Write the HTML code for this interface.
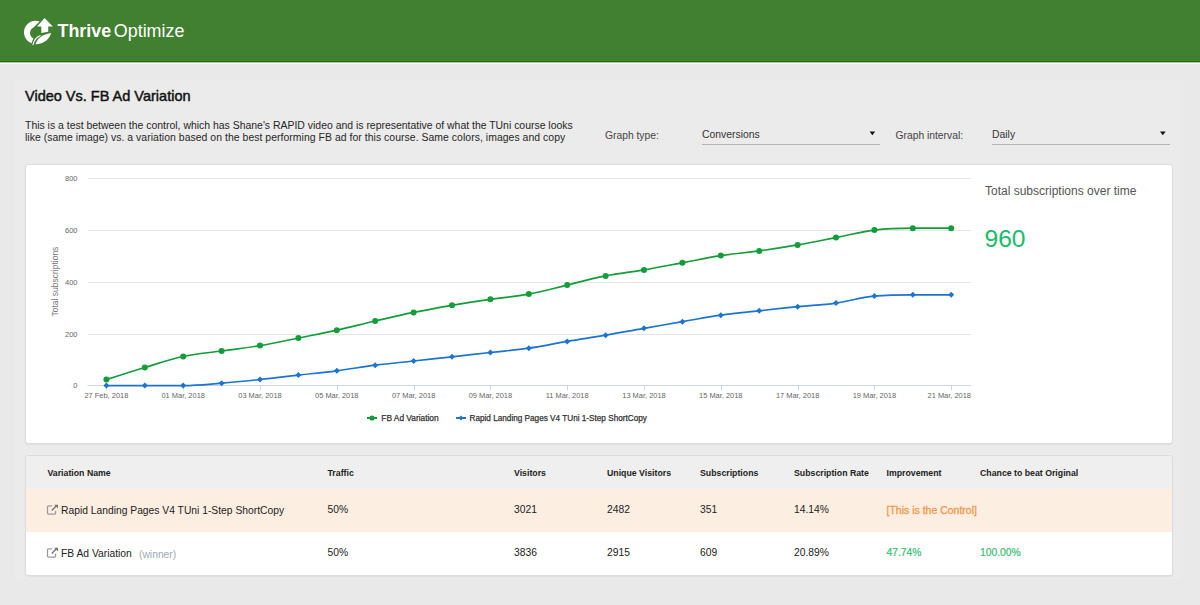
<!DOCTYPE html>
<html><head><meta charset="utf-8"><style>
*{box-sizing:border-box}
html,body{margin:0;padding:0}
body{width:1200px;height:605px;overflow:hidden;background:#e9e9e9;font-family:"Liberation Sans", sans-serif;position:relative;color:#222}
.abs{position:absolute;white-space:nowrap}
.hdr{position:absolute;left:0;top:0;width:1200px;height:61px;background:#417f31}
.hl1{position:absolute;left:0;top:61px;width:1200px;height:1px;background:#236c12}
.hl2{position:absolute;left:0;top:62px;width:1200px;height:1px;background:#a9c7a0}
.hl3{position:absolute;left:0;top:63px;width:1200px;height:1px;background:#fff}
.card{position:absolute;background:#fff;border:1px solid #dcdcdc;border-radius:3px;box-shadow:0 1px 2px rgba(0,0,0,0.05)}
.th{position:absolute;font-size:8.75px;font-weight:bold;color:#222;white-space:nowrap;top:467.8px}
.td{position:absolute;font-size:10.3px;color:#222;white-space:nowrap}
</style></head><body>
<div style="position:absolute;left:15px;top:80px;width:1165px;height:499px;background:#ebebeb"></div>
<div class="hdr"></div><div class="hl1"></div><div class="hl2"></div><div class="hl3"></div>
<svg width="40" height="38" style="position:absolute;left:20px;top:12px" viewBox="0 0 40 38">
<path d="M19.6 9.4 A11.1 11.1 0 1 0 11.6 31.2 C12 29.5 12.6 27.8 13.5 26.4 A6.1 6.1 0 0 1 13.5 15.4 Z" fill="#fff"/>
<path d="M24.5 5.9 L32.9 14.4 L28.2 14.4 L28.2 19.8 L21.3 20.9 L21.3 14.4 L17.1 14.4 Z" fill="#fff"/>
<path d="M15.6 32 C17 27 21.5 22.6 31.1 21 C29.8 26.5 24.5 31.6 16.9 32.2 Z" fill="#fff"/>
<path d="M12.9 33.2 C13.8 28.5 16.5 25.2 20.5 23.6" stroke="#fff" stroke-width="1.1" fill="none"/>
</svg>
<div class="abs" style="left:57.5px;top:18.5px;font-size:17.9px;line-height:24px;color:#fff"><b>Thrive</b><span style="margin-left:2.6px">Optimize</span></div>

<div class="abs" style="left:25px;top:88px;font-size:14.5px;line-height:16px;-webkit-text-stroke:0.45px #111;color:#111">Video Vs. FB Ad Variation</div>
<div class="abs" style="left:25px;top:119.7px;font-size:10.45px;line-height:12.6px;color:#262626">This is a test between the control, which has Shane's RAPID video and is representative of what the TUni course looks<br><span style="letter-spacing:0.037px">like (same image) vs. a variation based on the best performing FB ad for this course. Same colors, images and copy</span></div>

<div class="abs" style="left:605px;top:129.5px;font-size:10.3px;line-height:12px;color:#444">Graph type:</div>
<div class="abs" style="left:702px;top:129px;font-size:10.4px;line-height:12px;color:#333">Conversions</div>
<svg class="abs" width="1200" height="150" style="left:0;top:0"><path d="M869.6 131.6 L875.2 131.6 L872.4 135.2 Z" fill="#111"/><path d="M1160 131.6 L1165.6 131.6 L1162.8 135.2 Z" fill="#111"/></svg>
<div class="abs" style="left:702px;top:144px;width:177.5px;height:1px;background:#b5b5b5"></div>
<div class="abs" style="left:895.5px;top:129.5px;font-size:10.3px;line-height:12px;color:#444">Graph interval:</div>
<div class="abs" style="left:992px;top:129px;font-size:10.4px;line-height:12px;color:#333">Daily</div>

<div class="abs" style="left:992px;top:144px;width:178px;height:1px;background:#b5b5b5"></div>

<div class="card" style="left:25px;top:164px;width:1148px;height:280px"></div>
<svg width="1200" height="605" style="position:absolute;left:0;top:0">
<line x1="87.5" y1="178.5" x2="971" y2="178.5" stroke="#e6e6e6" stroke-width="1"/>
<line x1="87.5" y1="230.5" x2="971" y2="230.5" stroke="#e6e6e6" stroke-width="1"/>
<line x1="87.5" y1="282.5" x2="971" y2="282.5" stroke="#e6e6e6" stroke-width="1"/>
<line x1="87.5" y1="334.5" x2="971" y2="334.5" stroke="#e6e6e6" stroke-width="1"/>
<line x1="87.5" y1="385.5" x2="971" y2="385.5" stroke="#ccd6eb" stroke-width="1"/>
<line x1="106.5" y1="385.5" x2="106.5" y2="390.5" stroke="#ccd6eb" stroke-width="1"/>
<line x1="183.5" y1="385.5" x2="183.5" y2="390.5" stroke="#ccd6eb" stroke-width="1"/>
<line x1="260.5" y1="385.5" x2="260.5" y2="390.5" stroke="#ccd6eb" stroke-width="1"/>
<line x1="337.5" y1="385.5" x2="337.5" y2="390.5" stroke="#ccd6eb" stroke-width="1"/>
<line x1="414.5" y1="385.5" x2="414.5" y2="390.5" stroke="#ccd6eb" stroke-width="1"/>
<line x1="490.5" y1="385.5" x2="490.5" y2="390.5" stroke="#ccd6eb" stroke-width="1"/>
<line x1="567.5" y1="385.5" x2="567.5" y2="390.5" stroke="#ccd6eb" stroke-width="1"/>
<line x1="644.5" y1="385.5" x2="644.5" y2="390.5" stroke="#ccd6eb" stroke-width="1"/>
<line x1="721.5" y1="385.5" x2="721.5" y2="390.5" stroke="#ccd6eb" stroke-width="1"/>
<line x1="798.5" y1="385.5" x2="798.5" y2="390.5" stroke="#ccd6eb" stroke-width="1"/>
<line x1="874.5" y1="385.5" x2="874.5" y2="390.5" stroke="#ccd6eb" stroke-width="1"/>
<line x1="951.5" y1="385.5" x2="951.5" y2="390.5" stroke="#ccd6eb" stroke-width="1"/>
<text x="77.5" y="181.1" text-anchor="end" font-family="Liberation Sans, sans-serif" font-size="7.5" fill="#666">800</text>
<text x="77.5" y="233.1" text-anchor="end" font-family="Liberation Sans, sans-serif" font-size="7.5" fill="#666">600</text>
<text x="77.5" y="285.1" text-anchor="end" font-family="Liberation Sans, sans-serif" font-size="7.5" fill="#666">400</text>
<text x="77.5" y="337.1" text-anchor="end" font-family="Liberation Sans, sans-serif" font-size="7.5" fill="#666">200</text>
<text x="77.5" y="388.1" text-anchor="end" font-family="Liberation Sans, sans-serif" font-size="7.5" fill="#666">0</text>
<text x="106.4" y="398.1" text-anchor="middle" font-family="Liberation Sans, sans-serif" font-size="7.45" fill="#666">27 Feb, 2018</text>
<text x="183.2" y="398.1" text-anchor="middle" font-family="Liberation Sans, sans-serif" font-size="7.45" fill="#666">01 Mar, 2018</text>
<text x="260.0" y="398.1" text-anchor="middle" font-family="Liberation Sans, sans-serif" font-size="7.45" fill="#666">03 Mar, 2018</text>
<text x="336.8" y="398.1" text-anchor="middle" font-family="Liberation Sans, sans-serif" font-size="7.45" fill="#666">05 Mar, 2018</text>
<text x="413.6" y="398.1" text-anchor="middle" font-family="Liberation Sans, sans-serif" font-size="7.45" fill="#666">07 Mar, 2018</text>
<text x="490.4" y="398.1" text-anchor="middle" font-family="Liberation Sans, sans-serif" font-size="7.45" fill="#666">09 Mar, 2018</text>
<text x="567.2" y="398.1" text-anchor="middle" font-family="Liberation Sans, sans-serif" font-size="7.45" fill="#666">11 Mar, 2018</text>
<text x="644.0" y="398.1" text-anchor="middle" font-family="Liberation Sans, sans-serif" font-size="7.45" fill="#666">13 Mar, 2018</text>
<text x="720.8" y="398.1" text-anchor="middle" font-family="Liberation Sans, sans-serif" font-size="7.45" fill="#666">15 Mar, 2018</text>
<text x="797.6" y="398.1" text-anchor="middle" font-family="Liberation Sans, sans-serif" font-size="7.45" fill="#666">17 Mar, 2018</text>
<text x="874.4" y="398.1" text-anchor="middle" font-family="Liberation Sans, sans-serif" font-size="7.45" fill="#666">19 Mar, 2018</text>
<text x="971.0" y="398.1" text-anchor="end" font-family="Liberation Sans, sans-serif" font-size="7.45" fill="#666">21 Mar, 2018</text>
<text x="0" y="0" transform="translate(57.6,281.6) rotate(-90)" text-anchor="middle" font-family="Liberation Sans, sans-serif" font-size="8.5" fill="#777">Total subscriptions</text>
<path d="M106.40 385.60 C106.40 385.60 129.44 385.60 144.80 385.60 C160.16 385.60 167.84 385.60 183.20 385.60 C198.56 385.60 206.24 384.42 221.60 383.20 C236.96 381.98 244.64 381.12 260.00 379.50 C275.36 377.88 283.04 376.84 298.40 375.10 C313.76 373.36 321.44 372.78 336.80 370.80 C352.16 368.82 359.84 367.16 375.20 365.20 C390.56 363.24 398.24 362.68 413.60 361.00 C428.96 359.32 436.64 358.50 452.00 356.80 C467.36 355.10 475.04 354.22 490.40 352.50 C505.76 350.78 513.44 350.42 528.80 348.20 C544.16 345.98 551.84 344.00 567.20 341.40 C582.56 338.80 590.24 337.82 605.60 335.20 C620.96 332.58 628.64 331.00 644.00 328.30 C659.36 325.60 667.04 324.32 682.40 321.70 C697.76 319.08 705.44 317.38 720.80 315.20 C736.16 313.02 743.84 312.50 759.20 310.80 C774.56 309.10 782.24 308.24 797.60 306.70 C812.96 305.16 820.64 305.22 836.00 303.10 C851.36 300.98 859.04 297.40 874.40 296.10 C889.76 294.80 897.44 294.80 912.80 294.80 C928.16 294.80 951.20 294.80 951.20 294.80" fill="none" stroke="#1c74d0" stroke-width="1.7" stroke-linejoin="round" stroke-linecap="round"/>
<path d="M106.40 379.60 C106.40 379.60 129.44 372.12 144.80 367.50 C160.16 362.88 167.84 359.80 183.20 356.50 C198.56 353.20 206.24 353.18 221.60 351.00 C236.96 348.82 244.64 348.20 260.00 345.60 C275.36 343.00 283.04 341.08 298.40 338.00 C313.76 334.92 321.44 333.60 336.80 330.20 C352.16 326.80 359.84 324.56 375.20 321.00 C390.56 317.44 398.24 315.54 413.60 312.40 C428.96 309.26 436.64 307.92 452.00 305.30 C467.36 302.68 475.04 301.54 490.40 299.30 C505.76 297.06 513.44 296.94 528.80 294.10 C544.16 291.26 551.84 288.74 567.20 285.10 C582.56 281.46 590.24 278.94 605.60 275.90 C620.96 272.86 628.64 272.52 644.00 269.90 C659.36 267.28 667.04 265.66 682.40 262.80 C697.76 259.94 705.44 257.98 720.80 255.60 C736.16 253.22 743.84 253.04 759.20 250.90 C774.56 248.76 782.24 247.56 797.60 244.90 C812.96 242.24 820.64 240.56 836.00 237.60 C851.36 234.64 859.04 231.98 874.40 230.10 C889.76 228.22 897.44 228.20 912.80 228.20 C928.16 228.20 951.20 228.20 951.20 228.20" fill="none" stroke="#149c3a" stroke-width="1.7" stroke-linejoin="round" stroke-linecap="round"/>
<path d="M106.40 382.60 L109.40 385.60 L106.40 388.60 L103.40 385.60Z" fill="#1c74d0"/>
<path d="M144.80 382.60 L147.80 385.60 L144.80 388.60 L141.80 385.60Z" fill="#1c74d0"/>
<path d="M183.20 382.60 L186.20 385.60 L183.20 388.60 L180.20 385.60Z" fill="#1c74d0"/>
<path d="M221.60 380.20 L224.60 383.20 L221.60 386.20 L218.60 383.20Z" fill="#1c74d0"/>
<path d="M260.00 376.50 L263.00 379.50 L260.00 382.50 L257.00 379.50Z" fill="#1c74d0"/>
<path d="M298.40 372.10 L301.40 375.10 L298.40 378.10 L295.40 375.10Z" fill="#1c74d0"/>
<path d="M336.80 367.80 L339.80 370.80 L336.80 373.80 L333.80 370.80Z" fill="#1c74d0"/>
<path d="M375.20 362.20 L378.20 365.20 L375.20 368.20 L372.20 365.20Z" fill="#1c74d0"/>
<path d="M413.60 358.00 L416.60 361.00 L413.60 364.00 L410.60 361.00Z" fill="#1c74d0"/>
<path d="M452.00 353.80 L455.00 356.80 L452.00 359.80 L449.00 356.80Z" fill="#1c74d0"/>
<path d="M490.40 349.50 L493.40 352.50 L490.40 355.50 L487.40 352.50Z" fill="#1c74d0"/>
<path d="M528.80 345.20 L531.80 348.20 L528.80 351.20 L525.80 348.20Z" fill="#1c74d0"/>
<path d="M567.20 338.40 L570.20 341.40 L567.20 344.40 L564.20 341.40Z" fill="#1c74d0"/>
<path d="M605.60 332.20 L608.60 335.20 L605.60 338.20 L602.60 335.20Z" fill="#1c74d0"/>
<path d="M644.00 325.30 L647.00 328.30 L644.00 331.30 L641.00 328.30Z" fill="#1c74d0"/>
<path d="M682.40 318.70 L685.40 321.70 L682.40 324.70 L679.40 321.70Z" fill="#1c74d0"/>
<path d="M720.80 312.20 L723.80 315.20 L720.80 318.20 L717.80 315.20Z" fill="#1c74d0"/>
<path d="M759.20 307.80 L762.20 310.80 L759.20 313.80 L756.20 310.80Z" fill="#1c74d0"/>
<path d="M797.60 303.70 L800.60 306.70 L797.60 309.70 L794.60 306.70Z" fill="#1c74d0"/>
<path d="M836.00 300.10 L839.00 303.10 L836.00 306.10 L833.00 303.10Z" fill="#1c74d0"/>
<path d="M874.40 293.10 L877.40 296.10 L874.40 299.10 L871.40 296.10Z" fill="#1c74d0"/>
<path d="M912.80 291.80 L915.80 294.80 L912.80 297.80 L909.80 294.80Z" fill="#1c74d0"/>
<path d="M951.20 291.80 L954.20 294.80 L951.20 297.80 L948.20 294.80Z" fill="#1c74d0"/>
<circle cx="106.40" cy="379.60" r="3" fill="#149c3a"/>
<circle cx="144.80" cy="367.50" r="3" fill="#149c3a"/>
<circle cx="183.20" cy="356.50" r="3" fill="#149c3a"/>
<circle cx="221.60" cy="351.00" r="3" fill="#149c3a"/>
<circle cx="260.00" cy="345.60" r="3" fill="#149c3a"/>
<circle cx="298.40" cy="338.00" r="3" fill="#149c3a"/>
<circle cx="336.80" cy="330.20" r="3" fill="#149c3a"/>
<circle cx="375.20" cy="321.00" r="3" fill="#149c3a"/>
<circle cx="413.60" cy="312.40" r="3" fill="#149c3a"/>
<circle cx="452.00" cy="305.30" r="3" fill="#149c3a"/>
<circle cx="490.40" cy="299.30" r="3" fill="#149c3a"/>
<circle cx="528.80" cy="294.10" r="3" fill="#149c3a"/>
<circle cx="567.20" cy="285.10" r="3" fill="#149c3a"/>
<circle cx="605.60" cy="275.90" r="3" fill="#149c3a"/>
<circle cx="644.00" cy="269.90" r="3" fill="#149c3a"/>
<circle cx="682.40" cy="262.80" r="3" fill="#149c3a"/>
<circle cx="720.80" cy="255.60" r="3" fill="#149c3a"/>
<circle cx="759.20" cy="250.90" r="3" fill="#149c3a"/>
<circle cx="797.60" cy="244.90" r="3" fill="#149c3a"/>
<circle cx="836.00" cy="237.60" r="3" fill="#149c3a"/>
<circle cx="874.40" cy="230.10" r="3" fill="#149c3a"/>
<circle cx="912.80" cy="228.20" r="3" fill="#149c3a"/>
<circle cx="951.20" cy="228.20" r="3" fill="#149c3a"/>
<line x1="367" y1="418" x2="377" y2="418" stroke="#149c3a" stroke-width="2"/><circle cx="372" cy="418" r="2.6" fill="#149c3a"/>
<text x="381.3" y="420.9" font-family="Liberation Sans, sans-serif" font-size="8.35" fill="#333" stroke="#333" stroke-width="0.25">FB Ad Variation</text>
<line x1="456" y1="418" x2="466" y2="418" stroke="#1c74d0" stroke-width="2"/><path d="M461 415.5 L463.5 418 L461 420.5 L458.5 418Z" fill="#1c74d0"/>
<text x="469.5" y="420.9" font-family="Liberation Sans, sans-serif" font-size="8.2" fill="#333" stroke="#333" stroke-width="0.25">Rapid Landing Pages V4 TUni 1-Step ShortCopy</text>
</svg>
<div class="abs" style="left:985px;top:184px;font-size:12px;line-height:14px;color:#555">Total subscriptions over time</div>
<div class="abs" style="left:984.5px;top:225px;font-size:24.6px;line-height:28px;color:#18bd68">960</div>

<div class="card" style="left:25px;top:455px;width:1148px;height:121px;overflow:hidden">
  <div style="position:absolute;left:0;top:0;width:100%;height:33px;background:#efefef"></div>
  <div style="position:absolute;left:0;top:33px;width:100%;height:43px;background:#fdeee2"></div>
</div>
<div class="th" style="left:47.5px">Variation Name</div>
<div class="th" style="left:327.5px">Traffic</div>
<div class="th" style="left:514px">Visitors</div>
<div class="th" style="left:607px">Unique Visitors</div>
<div class="th" style="left:700px">Subscriptions</div>
<div class="th" style="left:794px">Subscription Rate</div>
<div class="th" style="left:886.5px">Improvement</div>
<div class="th" style="left:980px">Chance to beat Original</div>

<svg class="abs" width="14" height="12" style="left:46.2px;top:504.3px" viewBox="0 0 14 12"><path d="M6 1.9 H2.5 A1 1 0 0 0 1.5 2.9 V9.1 A1 1 0 0 0 2.5 10.1 H8.6 A1 1 0 0 0 9.6 9.1 V6.8" fill="none" stroke="#999" stroke-width="1.2"/><path d="M5.8 6.4 L10.6 1.6" stroke="#6f747a" stroke-width="1.4"/><path d="M8.2 0.8 L12 0.8 L12 4.6Z" fill="#6f747a"/></svg>
<div class="td" style="left:61px;top:505px">Rapid Landing Pages V4 TUni 1-Step ShortCopy</div>
<div class="td" style="left:327.5px;top:503.8px">50%</div>
<div class="td" style="left:514px;top:503.8px">3021</div>
<div class="td" style="left:607px;top:503.8px">2482</div>
<div class="td" style="left:700px;top:503.8px">351</div>
<div class="td" style="left:794px;top:503.8px">14.14%</div>
<div class="td" style="left:886.5px;top:503.8px;font-size:10.5px;color:#f39848;-webkit-text-stroke:0.3px #f39848">[This is the Control]</div>

<svg class="abs" width="14" height="12" style="left:46.2px;top:547.3px" viewBox="0 0 14 12"><path d="M6 1.9 H2.5 A1 1 0 0 0 1.5 2.9 V9.1 A1 1 0 0 0 2.5 10.1 H8.6 A1 1 0 0 0 9.6 9.1 V6.8" fill="none" stroke="#999" stroke-width="1.2"/><path d="M5.8 6.4 L10.6 1.6" stroke="#6f747a" stroke-width="1.4"/><path d="M8.2 0.8 L12 0.8 L12 4.6Z" fill="#6f747a"/></svg>
<div class="td" style="left:61px;top:548px">FB Ad Variation</div>
<div class="td" style="left:139px;top:549px;color:#9aa9b6">(winner)</div>
<div class="td" style="left:327.5px;top:546.8px">50%</div>
<div class="td" style="left:514px;top:546.8px">3836</div>
<div class="td" style="left:607px;top:546.8px">2915</div>
<div class="td" style="left:700px;top:546.8px">609</div>
<div class="td" style="left:794px;top:546.8px">20.89%</div>
<div class="td" style="left:886.5px;top:546.8px;color:#36bd72;-webkit-text-stroke:0.2px #36bd72">47.74%</div>
<div class="td" style="left:980px;top:546.8px;color:#36bd72;-webkit-text-stroke:0.2px #36bd72">100.00%</div>
</body></html>
